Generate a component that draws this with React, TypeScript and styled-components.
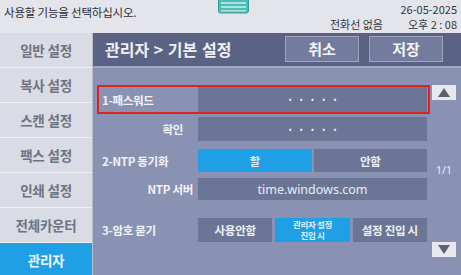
import React from 'react';
import styled, { createGlobalStyle } from 'styled-components';

const Global = createGlobalStyle`
  html, body { margin: 0; padding: 0; background: #8a92b4; }
  body { font-family: "Noto Sans CJK KR", "Noto Sans", sans-serif; }
  #root { width: 461px; height: 275px; overflow: hidden; }
  * { box-sizing: border-box; }
`;

const Screen = styled.div`
  width: 461px;
  height: 275px;
  display: flex;
  flex-direction: column;
  overflow: hidden;
`;

const StatusBar = styled.div`
  height: 33px;
  flex: none;
  background: #e3e5eb;
  display: flex;
  align-items: flex-start;
`;

const StatusMsg = styled.div`
  width: 218px;
  flex: none;
  padding: 4px 0 0 4px;
  font-size: 11.5px;
  line-height: 16px;
  color: #2b2d38;
  letter-spacing: -0.2px;
`;

const StatusIcon = styled.svg`
  flex: none;
  display: block;
`;

const StatusRight = styled.div`
  margin-left: auto;
  padding: 2px 4px 0 0;
  display: flex;
  flex-direction: column;
  align-items: flex-end;
  color: #33353f;
`;

const StatusLine = styled.div<{ $gap?: number }>`
  display: flex;
  gap: ${(p) => p.$gap ?? 0}px;
  font-size: 11px;
  line-height: 14px;
  margin-top: ${(p) => (p.$gap ? 1 : 0)}px;
`;

const Body = styled.div`
  flex: 1;
  display: flex;
  min-height: 0;
`;

const Sidebar = styled.div`
  width: 93px;
  flex: none;
  display: flex;
  flex-direction: column;
  background: #d9dce4;
  border-right: 1px solid #b9bdca;
`;

const Tab = styled.div<{ $active?: boolean }>`
  height: 35px;
  flex: none;
  display: flex;
  align-items: center;
  justify-content: center;
  border-bottom: 1px solid #eef0f4;
  background: ${(p) => (p.$active ? '#1f9fe6' : '#d9dce4')};
  color: ${(p) => (p.$active ? '#f4f8ff' : '#6e7383')};
  font-size: 13.5px;
  font-weight: 700;
  letter-spacing: -0.2px;
`;

const Main = styled.div`
  flex: 1;
  display: flex;
  flex-direction: column;
  background: #8a92b4;
`;

const Header = styled.div`
  height: 35px;
  flex: none;
  display: flex;
  align-items: center;
  padding: 0 18px 2px 12px;
  background: #5a6383;
  border-bottom: 2px solid #a1a7c2;
`;

const Title = styled.div`
  flex: 1;
  color: #eef0f6;
  font-size: 16px;
  font-weight: 700;
  word-spacing: 1px;
`;

const HeadButton = styled.div`
  width: 74px;
  height: 26px;
  margin-left: 10px;
  display: flex;
  align-items: center;
  justify-content: center;
  background: #737c9c;
  border: 1px solid #a0a6bf;
  color: #f4f4f8;
  font-size: 15px;
  font-weight: 700;
`;

const Content = styled.div`
  flex: 1;
  display: flex;
  padding-left: 4px;
`;

const Form = styled.div`
  width: 333px;
  flex: none;
  display: flex;
  flex-direction: column;
`;

const Row = styled.div<{ $mt: number; $h: number; $selected?: boolean }>`
  display: flex;
  margin-top: ${(p) => p.$mt}px;
  height: ${(p) => p.$h + 4}px;
  border: 2px solid ${(p) => (p.$selected ? '#e3201b' : 'transparent')};
`;

const Label = styled.div<{ $pr?: number }>`
  width: 99px;
  flex: none;
  display: flex;
  align-items: center;
  justify-content: ${(p) => (p.$pr !== undefined ? 'flex-end' : 'flex-start')};
  padding: ${(p) => (p.$pr !== undefined ? `0 ${p.$pr}px 0 0` : '0 0 0 3px')};
  color: #f1f2f8;
  font-size: 11.5px;
  font-weight: 700;
  letter-spacing: -0.3px;
  white-space: nowrap;
`;

const Field = styled.div`
  width: 229px;
  flex: none;
  display: flex;
  align-items: center;
  justify-content: center;
  background: #6b7696;
  color: #e9ecf4;
  font-family: "Noto Sans", sans-serif;
  font-size: 12.5px;
`;

const Dots = styled.span`
  font-family: "Noto Sans", sans-serif;
  font-size: 9px;
  letter-spacing: 7.8px;
  padding-left: 7.8px;
  color: #f2f4fa;
`;

const Options = styled.div<{ $gap: number }>`
  width: 229px;
  flex: none;
  display: flex;
  gap: ${(p) => p.$gap}px;
`;

const Option = styled.div<{ $on?: boolean; $small?: boolean }>`
  flex: 1;
  display: flex;
  align-items: center;
  justify-content: center;
  text-align: center;
  background: ${(p) => (p.$on ? '#1f9fe6' : '#6b7696')};
  color: ${(p) => (p.$on ? '#e2eefa' : '#eef0f6')};
  font-size: ${(p) => (p.$small ? 8.5 : 11.5)}px;
  line-height: ${(p) => (p.$small ? 11 : 14)}px;
  font-weight: 700;
  letter-spacing: -0.3px;
`;

const Side = styled.div`
  width: 24px;
  margin-left: 2px;
  display: flex;
  flex-direction: column;
  align-items: center;
`;

const ArrowBtn = styled.div<{ $mt: number }>`
  width: 24px;
  height: 15px;
  margin-top: ${(p) => p.$mt}px;
  display: flex;
  align-items: center;
  justify-content: center;
  background: #e6e8ee;
`;

const PageNum = styled.div`
  margin-top: 64px;
  height: 12px;
  line-height: 12px;
  font-family: "Noto Sans", sans-serif;
  font-size: 10.5px;
  color: #eef0f8;
`;

const Tri = ({ down }: { down?: boolean }) => (
  <svg width="14" height="11" viewBox="0 0 14 11">
    <polygon points={down ? '1,1 13,1 7,10' : '1,10 13,10 7,1'} fill="#5b6172" />
  </svg>
);

export default function App() {
  const tabs = ['일반 설정', '복사 설정', '스캔 설정', '팩스 설정', '인쇄 설정', '전체카운터', '관리자'];
  return (
    <>
      <Global />
      <Screen>
        <StatusBar>
          <StatusMsg>사용할 기능을 선택하십시오.</StatusMsg>
          <StatusIcon width="31" height="14" viewBox="0 0 31 14">
            <rect x="0.5" y="-4" width="30" height="17" rx="2" fill="#4fbdb5" stroke="#3a9c96" />
            <rect x="3" y="2" width="25" height="2" fill="#a9e6e0" />
            <rect x="3" y="6" width="25" height="2" fill="#a9e6e0" />
            <rect x="3" y="10" width="25" height="1.5" fill="#a9e6e0" />
          </StatusIcon>
          <StatusRight>
            <StatusLine>26-05-2025</StatusLine>
            <StatusLine $gap={25}>
              <span>전화선 없음</span>
              <span>오후 2 : 08</span>
            </StatusLine>
          </StatusRight>
        </StatusBar>
        <Body>
          <Sidebar>
            {tabs.map((t) => (
              <Tab key={t} $active={t === '관리자'}>
                {t}
              </Tab>
            ))}
          </Sidebar>
          <Main>
            <Header>
              <Title>관리자 &gt; 기본 설정</Title>
              <HeadButton>취소</HeadButton>
              <HeadButton>저장</HeadButton>
            </Header>
            <Content>
              <Form>
                <Row $mt={17} $h={25} $selected>
                  <Label>1-패스워드</Label>
                  <Field>
                    <Dots>•••••</Dots>
                  </Field>
                </Row>
                <Row $mt={1} $h={24}>
                  <Label $pr={15}>확인</Label>
                  <Field>
                    <Dots>•••••</Dots>
                  </Field>
                </Row>
                <Row $mt={4} $h={23}>
                  <Label>2-NTP 동기화</Label>
                  <Options $gap={2}>
                    <Option $on>할</Option>
                    <Option>안함</Option>
                  </Options>
                </Row>
                <Row $mt={2} $h={22}>
                  <Label $pr={5}>NTP 서버</Label>
                  <Field>time.windows.com</Field>
                </Row>
                <Row $mt={14} $h={24}>
                  <Label>3-암호 묻기</Label>
                  <Options $gap={3}>
                    <Option>사용안함</Option>
                    <Option $on $small>
                      관리자 설정
                      <br />
                      진입 시
                    </Option>
                    <Option>설정 진입 시</Option>
                  </Options>
                </Row>
              </Form>
              <Side>
                <ArrowBtn $mt={17}>
                  <Tri />
                </ArrowBtn>
                <PageNum>1/1</PageNum>
                <ArrowBtn $mt={66}>
                  <Tri down />
                </ArrowBtn>
              </Side>
            </Content>
          </Main>
        </Body>
      </Screen>
    </>
  );
}
